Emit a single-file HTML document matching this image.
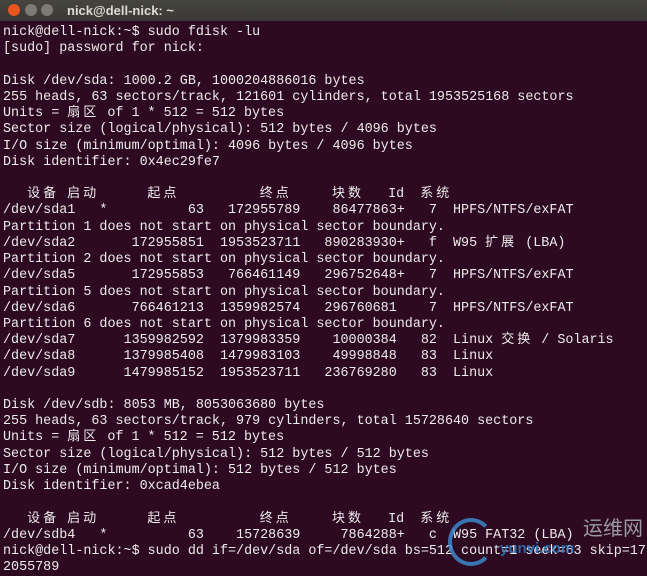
<!DOCTYPE html>
<html><head><meta charset="utf-8"><style>
html,body{margin:0;padding:0;width:647px;height:567px;overflow:hidden;background:#2d0922;}
#tb{position:absolute;left:0;top:0;width:647px;height:21px;background:linear-gradient(#45443f,#3a3935);}
.b{position:absolute;top:4px;width:12px;height:12px;border-radius:50%;}
#title{position:absolute;left:67px;top:3px;font:bold 13px "Liberation Sans",sans-serif;color:#dfdbd2;}
#t{position:absolute;left:3px;top:25px;font-family:"Liberation Mono",monospace;font-size:13.4px;color:#ececea;}
#t div{height:16.22px;line-height:16.22px;white-space:pre;overflow:visible;}
.c{line-height:0;font-family:"Noto Sans CJK SC",sans-serif;font-size:13px;letter-spacing:3px;}
#wm{position:absolute;left:583px;top:512px;font:20px "Noto Sans CJK SC",sans-serif;color:#9a9aa0;}
#wm2{position:absolute;left:500px;top:540px;font:bold 15px "Liberation Sans",sans-serif;color:#2f7fc8;opacity:.8;}
#arc{position:absolute;left:448px;top:518px;width:38px;height:40px;border-radius:50%;border:4px solid #3b8fd4;border-right-color:transparent;opacity:.8;}
</style></head><body>
<div id="tb">
<div class="b" style="left:8px;background:#e9541f;"></div>
<div class="b" style="left:25px;background:#7b7a74;"></div>
<div class="b" style="left:41px;background:#7b7a74;"></div>
<div id="title">nick@dell-nick: ~</div>
</div>
<div id="t"><div>nick@dell-nick:~$ sudo fdisk -lu</div><div>[sudo] password for nick:</div><div> </div><div>Disk /dev/sda: 1000.2 GB, 1000204886016 bytes</div><div>255 heads, 63 sectors/track, 121601 cylinders, total 1953525168 sectors</div><div>Units = <span class="c">扇区</span> of 1 * 512 = 512 bytes</div><div>Sector size (logical/physical): 512 bytes / 4096 bytes</div><div>I/O size (minimum/optimal): 4096 bytes / 4096 bytes</div><div>Disk identifier: 0x4ec29fe7</div><div> </div><div>   <span class="c">设备</span> <span class="c">启动</span>      <span class="c">起点</span>          <span class="c">终点</span>     <span class="c">块数</span>   Id  <span class="c">系统</span></div><div>/dev/sda1   *          63   172955789    86477863+   7  HPFS/NTFS/exFAT</div><div>Partition 1 does not start on physical sector boundary.</div><div>/dev/sda2       172955851  1953523711   890283930+   f  W95 <span class="c">扩展</span> (LBA)</div><div>Partition 2 does not start on physical sector boundary.</div><div>/dev/sda5       172955853   766461149   296752648+   7  HPFS/NTFS/exFAT</div><div>Partition 5 does not start on physical sector boundary.</div><div>/dev/sda6       766461213  1359982574   296760681    7  HPFS/NTFS/exFAT</div><div>Partition 6 does not start on physical sector boundary.</div><div>/dev/sda7      1359982592  1379983359    10000384   82  Linux <span class="c">交换</span> / Solaris</div><div>/dev/sda8      1379985408  1479983103    49998848   83  Linux</div><div>/dev/sda9      1479985152  1953523711   236769280   83  Linux</div><div> </div><div>Disk /dev/sdb: 8053 MB, 8053063680 bytes</div><div>255 heads, 63 sectors/track, 979 cylinders, total 15728640 sectors</div><div>Units = <span class="c">扇区</span> of 1 * 512 = 512 bytes</div><div>Sector size (logical/physical): 512 bytes / 512 bytes</div><div>I/O size (minimum/optimal): 512 bytes / 512 bytes</div><div>Disk identifier: 0xcad4ebea</div><div> </div><div>   <span class="c">设备</span> <span class="c">启动</span>      <span class="c">起点</span>          <span class="c">终点</span>     <span class="c">块数</span>   Id  <span class="c">系统</span></div><div>/dev/sdb4   *          63    15728639     7864288+   c  W95 FAT32 (LBA)</div><div>nick@dell-nick:~$ sudo dd if=/dev/sda of=/dev/sda bs=512 count=1 seek=63 skip=17</div><div>2055789</div></div>
<div id="arc"></div>
<div id="wm">运维网</div>
<div id="wm2">yunvi.com</div>
</body></html>
